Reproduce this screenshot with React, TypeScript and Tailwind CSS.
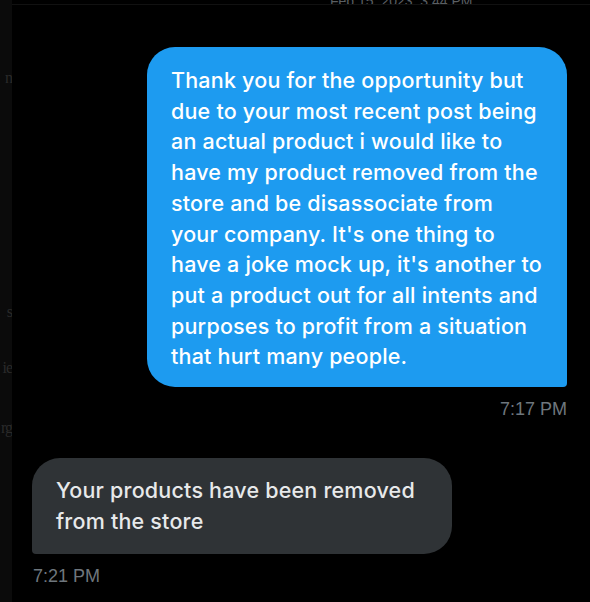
const sideBits = [
  { text: "n", top: "mt-[68px]" },
  { text: "s", top: "mt-[214px]" },
  { text: "ie", top: "mt-[36px]" },
  { text: "rg", top: "mt-[40px]" },
];

const Bubble = ({ mine, children }: { mine?: boolean; children: React.ReactNode }) => (
  <div
    className={
      mine
        ? "max-w-[420px] rounded-[28px] rounded-br-[4px] bg-[#1d9bf0] px-6 pt-[18px] pb-[15px] text-white"
        : "max-w-[420px] rounded-[28px] rounded-bl-[4px] bg-[#2f3336] px-6 pt-[17px] pb-[18px] text-[#e7e9ea]"
    }
  >
    <p className="font-['Inter',sans-serif] text-[21.5px] leading-[30.7px] font-medium tracking-[0.2px]">{children}</p>
  </div>
);

export default function App() {
  return (
    <div className="flex h-[602px] w-[590px] overflow-hidden bg-black">
      {/* sidebar edge, mostly cut off */}
      <div className="flex w-[12px] shrink-0 flex-col items-end overflow-hidden bg-[#0b0b0b] font-['Liberation_Serif',serif] text-[16px] tracking-[-1px] text-[#2a2a2a]">
        {sideBits.map((b) => (
          <span key={b.text} className={`${b.top} whitespace-nowrap leading-5`}>
            {b.text}
          </span>
        ))}
      </div>

      <div className="flex flex-1 flex-col">
        {/* date header, scrolled mostly out of view */}
        <div className="h-[5px] overflow-hidden border-b border-[#111]">
          <div className="-mt-[9px] pl-[318px] font-['Liberation_Sans',sans-serif] text-[14px] text-[#5a5f63]">
            Feb 15, 2023, 3:44 PM
          </div>
        </div>

        <div className="flex flex-col pr-[23px] pl-[20px] pt-[42px]">
          <div className="flex flex-col items-end">
            <Bubble mine>
              Thank you for the opportunity but due to your most recent post being an actual product i would like to
              have my product removed from the store and be disassociate from your company. It's one thing to have a
              joke mock up, it's another to put a product out for all intents and purposes to profit from a situation
              that hurt many people.
            </Bubble>
            <span className="mt-[10px] font-['Liberation_Sans',sans-serif] text-[18px] leading-6 text-[#6e767d]">
              7:17 PM
            </span>
          </div>

          <div className="mt-[37px] flex flex-col items-start">
            <Bubble>Your products have been removed from the store</Bubble>
            <span className="mt-[10px] pl-px font-['Liberation_Sans',sans-serif] text-[18px] leading-6 text-[#6e767d]">
              7:21 PM
            </span>
          </div>
        </div>
      </div>
    </div>
  );
}
